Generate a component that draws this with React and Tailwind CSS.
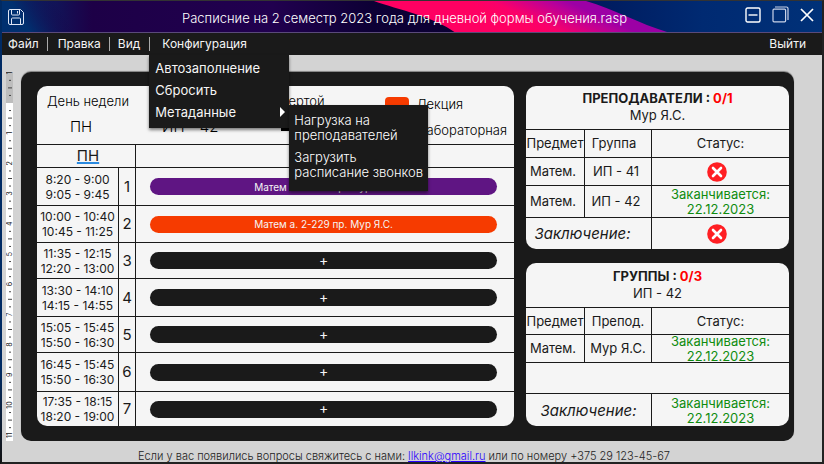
import React from "react";

const lessons = [
  { n: 1, from: "8:20 - 9:00", to: "9:05 - 9:45", text: "Матем а. 2-229 пр. Мур Я.С.", row: "h-[38px]", pill: "bg-[#5f1583] text-[10px]" },
  { n: 2, from: "10:00 - 10:40", to: "10:45 - 11:25", text: "Матем а. 2-229 пр. Мур Я.С.", row: "h-[37px]", pill: "bg-[#f63b00] text-[10px]" },
  { n: 3, from: "11:35 - 12:15", to: "12:20 - 13:00", text: "+", row: "h-[36px]", pill: "bg-[#1a1a1a] pb-[2px] text-sm" },
  { n: 4, from: "13:30 - 14:10", to: "14:15 - 14:55", text: "+", row: "h-[38px]", pill: "bg-[#1a1a1a] pb-[2px] text-sm" },
  { n: 5, from: "15:05 - 15:45", to: "15:50 - 16:30", text: "+", row: "h-[36px]", pill: "bg-[#1a1a1a] pb-[2px] text-sm" },
  { n: 6, from: "16:45 - 15:45", to: "15:50 - 16:30", text: "+", row: "h-[39px]", pill: "bg-[#1a1a1a] pb-[2px] text-sm" },
  { n: 7, from: "17:35 - 18:15", to: "18:20 - 19:00", text: "+", row: "h-[35px]", pill: "bg-[#1a1a1a] pb-[2px] text-sm" },
];

function SaveIcon() {
  return (
    <svg width="16" height="16" viewBox="0 0 16 16" fill="none" stroke="#dfe6f5" strokeWidth="1">
      <path d="M2 .5h10.5l3 3V14a1.5 1.5 0 0 1-1.500 1.500H2A1.500 1.500 0 0 1 .5 14V2A1.500 1.500 0 0 1 2 .5z" />
      <path d="M3.500.5v4.500a1 1 0 0 0 1 1h6a1 1 0 0 0 1-1V.5M9.500 2v2.500" />
      <path d="M3.500 15.500v-5.500a1 1 0 0 1 1-1h7a1 1 0 0 1 1 1v5.500" />
    </svg>
  );
}

function MinimizeIcon() {
  return (
    <svg width="16" height="16" viewBox="0 0 16 16" fill="none" stroke="#fff" strokeWidth="1.4">
      <rect x="1" y="1" width="14" height="14" rx="1.5" />
      <path d="M3.500 8h9" />
    </svg>
  );
}

function RestoreIcon() {
  return (
    <svg width="17" height="17" viewBox="0 0 17 17" fill="none" stroke="#c9d3e8" strokeWidth="1.2">
      <rect x="1" y="3.2" width="12.600" height="12.600" rx="1" />
      <path d="M3 1h11.500a1.500 1.500 0 0 1 1.500 1.500V14" />
    </svg>
  );
}

function CloseIcon() {
  return (
    <svg width="14" height="14" viewBox="0 0 14 14" fill="none" stroke="#fff" strokeWidth="1.7">
      <path d="M1 1l12 12M13 1L1 13" />
    </svg>
  );
}

function ErrorIcon() {
  return (
    <svg className="block" width="20" height="20" viewBox="0 0 20 20" role="img" aria-label="Ошибка">
      <circle cx="10" cy="10" r="9.800" fill="#ff1f23" />
      <path d="M6 6l8 8M14 6l-8 8" stroke="#fff" strokeWidth="2.600" strokeLinecap="round" />
    </svg>
  );
}

function TitleArt() {
  return (
    <svg className="absolute inset-0 h-full w-full" viewBox="0 0 820 32" preserveAspectRatio="none" aria-hidden="true">
      <defs>
        <linearGradient id="base" gradientUnits="userSpaceOnUse" x1="0" y1="0" x2="450" y2="0">
          <stop offset="0" stopColor="#003070" />
          <stop offset="0.2" stopColor="#1d0047" />
          <stop offset="0.6" stopColor="#21004f" />
          <stop offset="0.82" stopColor="#0d0035" />
          <stop offset="1" stopColor="#0b0033" />
        </linearGradient>
        <linearGradient id="corner" gradientUnits="userSpaceOnUse" x1="26" y1="28" x2="58" y2="8">
          <stop offset="0" stopColor="#003070" />
          <stop offset="1" stopColor="#1d0047" stopOpacity="0" />
        </linearGradient>
        <linearGradient id="pink" gradientUnits="userSpaceOnUse" x1="470" y1="3" x2="487" y2="-35">
          <stop offset="0" stopColor="#ff0062" />
          <stop offset="0.25" stopColor="#fa006a" />
          <stop offset="0.8" stopColor="#b8009a" />
          <stop offset="1" stopColor="#9c00a5" />
        </linearGradient>
        <linearGradient id="blue" gradientUnits="userSpaceOnUse" x1="580" y1="0" x2="820" y2="0">
          <stop offset="0" stopColor="#00195c" />
          <stop offset="0.5" stopColor="#002a72" />
          <stop offset="1" stopColor="#003178" />
        </linearGradient>
      </defs>
      <rect width="820" height="32" fill="url(#base)" />
      <rect width="120" height="32" fill="url(#corner)" />
      <path d="M372 0C397 9 430 15 454 32H680V0z" fill="url(#pink)" />
      <path d="M584 0C612 8 635 22 668 32H820V0z" fill="url(#blue)" />
    </svg>
  );
}

function Ruler() {
  const step = 30.2;
  const zero = 31;
  const marks = [];
  for (let i = -1; i <= 11; i++) {
    const y = zero + i * step;
    if (i !== 0) {
      marks.push(
        <text key={"n" + i} transform={"translate(6 " + y + ") rotate(-90)"} textAnchor="middle" fontSize="7" fontWeight="400" fill="#222" fontFamily="Inter, sans-serif">
          {Math.abs(i)}
        </text>
      );
    }
    if (i < 11) {
      marks.push(
        <path key={"t" + i} d={"M3 " + (y + step * 0.25) + "h2M2 " + (y + step / 2) + "h4M3 " + (y + step * 0.75) + "h2"} stroke="#444" strokeWidth="1" />
      );
    }
  }
  return (
    <svg className="shrink-0" width="7" height="369" viewBox="0 0 7 369" aria-hidden="true">
      <rect width="7" height="31" fill="#bdbdbd" />
      <rect y="31" width="7" height="338" fill="#fff" />
      {marks}
    </svg>
  );
}

function Ending() {
  return (
    <div className="-my-1 pt-px text-[13px] leading-[15px] text-[#0f8c0f]">
      Заканчивается:
      <br />
      22.12.2023
    </div>
  );
}

function SideCard({ title, count, name, headClass, children }) {
  return (
    <section className="overflow-hidden rounded-[10px] bg-[#f5f5f5]">
      <header className={"text-center " + headClass}>
        <h2 className="text-[13px] leading-4 font-bold">
          {title} : <span className="text-[#ff0000]">{count}</span>
        </h2>
        <p className="text-[13px] leading-[18px]">{name}</p>
      </header>
      <table className="w-full table-fixed border-separate border-spacing-0 text-center text-[13px] leading-[15px]">
        <colgroup>
          <col className="w-[58px]" />
          <col className="w-[67px]" />
          <col />
        </colgroup>
        <tbody>{children}</tbody>
      </table>
    </section>
  );
}

const line = "border-t border-[#1a1a1a] p-0 font-normal whitespace-nowrap";
const lineLeft = "border-t border-l border-[#1a1a1a] p-0 font-normal whitespace-nowrap";
const summary = " text-[15px] [font-style:oblique_10deg]";

export default function App() {
  return (
    <div className="min-h-screen bg-linear-to-b from-[#002a63] from-80% to-[#111] font-[Inter,'Noto_Sans',sans-serif] text-[#1a1a1a]">
      <div className="flex min-h-screen flex-col border-t border-r-2 border-b-2 border-l-2 border-t-[#333] border-r-[#222] border-b-[#222] border-l-transparent">
        <header className="relative h-8 text-white">
          <TitleArt />
          <div className="relative flex h-full items-center border-b border-[#5a4a7a] pr-2 pl-[6px]">
            <button aria-label="Сохранить">
              <SaveIcon />
            </button>
            <h1 className="flex-1 pt-[3px] pl-10 text-center text-[13px] leading-5 font-light">Расписние на 2 семестр 2023 года для дневной формы обучения.rasp</h1>
            <div className="flex items-center gap-[11px] pb-1">
              <button aria-label="Свернуть">
                <MinimizeIcon />
              </button>
              <button aria-label="Развернуть">
                <RestoreIcon />
              </button>
              <button aria-label="Закрыть">
                <CloseIcon />
              </button>
            </div>
          </div>
        </header>

        <nav className="flex h-[22px] items-center bg-[#1a1a1a] pr-4 pl-[6px] text-xs leading-4 text-[#f5f5f5]">
          <button>Файл</button>
          <span className="ml-2 h-[14px] w-px bg-[#aaa]" />
          <button className="ml-[10px]">Правка</button>
          <span className="ml-2 h-[14px] w-px bg-[#aaa]" />
          <button className="ml-2">Вид</button>
          <div className="relative ml-[9px] flex h-full items-center">
            <span className="h-[14px] w-px bg-[#aaa]" />
            <button className="ml-3">Конфигурация</button>
            <div className="absolute top-full left-0 z-10 flex h-[73px] w-[140px] flex-col items-start bg-[#1a1a1a] pt-[2px] pl-[6px] text-[13px] leading-[22px] shadow-[0_2px_3px_rgba(0,0,0,0.5)]">
              <button>Автозаполнение</button>
              <button>Сбросить</button>
              <div className="relative flex w-full items-center">
                <button className="flex w-full items-center justify-between pr-1">
                  Метаданные
                  <svg width="6" height="10" viewBox="0 0 6 10" fill="#fff">
                    <path d="M1 0l5 5-5 5z" />
                  </svg>
                </button>
                <div className="absolute top-1 left-full flex h-[86px] w-[139px] flex-col gap-[7px] bg-[#1a1a1a] pt-2 pl-[5px] leading-[15px] font-light whitespace-nowrap text-white shadow-[0_2px_3px_rgba(0,0,0,0.5)]">
                  <button className="text-left">
                    Нагрузка на
                    <br />
                    преподавателей
                  </button>
                  <button className="text-left">
                    Загрузить
                    <br />
                    расписание звонков
                  </button>
                </div>
              </div>
            </div>
          </div>
          <button className="ml-auto">Выйти</button>
        </nav>

        <main className="flex flex-1 flex-col bg-[#d3d3d3] pt-[17px]">
          <div className="flex items-start gap-2 pr-7 pl-1">
            <Ruler />
            <div className="flex flex-1 gap-3 rounded-[10px] bg-[#1a1a1a] pt-[14px] pr-[5px] pb-[15px] pl-4 shadow-[0_-1px_1px_rgba(0,0,0,0.4)]">
              <section className="flex-1 overflow-hidden rounded-[10px] bg-[#f5f5f5]">
                <div className="flex h-[58px] px-[7px] pt-[7px] text-[13px] leading-4 font-light text-black">
                  <div className="w-[115px] pl-[3px]">
                    <p>День недели</p>
                    <p className="mt-2 pl-[23px] text-[15px] leading-5">ПН</p>
                  </div>
                  <div className="w-[122px] pt-6 pl-[3px]">
                    <p className="text-[15px] leading-5">ИП - 42</p>
                  </div>
                  <div className="flex flex-1 flex-col">
                    <p>чертой</p>
                    <span className="mt-3 h-[10px] w-[14px] bg-black" />
                  </div>
                  <div className="grid grid-cols-[24px_auto] content-start items-center gap-x-2 gap-y-[10px] pt-[3px]">
                    <span className="h-[15px] rounded-[4px] bg-[#f63b00]" />
                    <span>Лекция</span>
                    <span className="h-[15px] rounded-[4px] bg-[#5f1583]" />
                    <span>Лабораторная</span>
                  </div>
                </div>
                <table className="w-full table-fixed border-separate border-spacing-0 text-center">
                  <colgroup>
                    <col className="w-[81px]" />
                    <col className="w-[17px]" />
                    <col />
                  </colgroup>
                  <thead>
                    <tr className="h-[23px]">
                      <th colSpan="2" className={line + " text-[15px] leading-4"}>
                        <span className="ml-1 underline decoration-[#2a8ae0] decoration-2 underline-offset-1">ПН</span>
                      </th>
                      <th className={lineLeft} />
                    </tr>
                  </thead>
                  <tbody>
                    {lessons.map((l) => (
                      <tr key={l.n} className={l.row}>
                        <td className={line + " text-xs leading-[15px]"}>
                          {l.from}
                          <br />
                          {l.to}
                        </td>
                        <td className={lineLeft + " text-[15px] leading-5"}>{l.n}</td>
                        <td className={lineLeft + " pr-[17px] pl-[14px]"}>
                          <button className={"block h-[17px] w-full rounded-full leading-[14px] text-[#f5f5f5] " + l.pill}>{l.text}</button>
                        </td>
                      </tr>
                    ))}
                  </tbody>
                </table>
              </section>

              <div className="flex w-[263px] flex-col gap-[14px]">
                <SideCard title="ПРЕПОДАВАТЕЛИ" count="0/1" name="Мур Я.С." headClass="h-[43px] pt-1">
                  <tr className="h-[28px]">
                    <th className={line}>Предмет</th>
                    <th className={lineLeft + " pr-2"}>Группа</th>
                    <th className={lineLeft}>Статус:</th>
                  </tr>
                  <tr className="h-[28px]">
                    <td className={line + " pr-1"}>Матем.</td>
                    <td className={lineLeft + " pr-1"}>ИП - 41</td>
                    <td className={lineLeft}>
                      <div className="flex justify-center pr-2">
                        <ErrorIcon />
                      </div>
                    </td>
                  </tr>
                  <tr className="h-8">
                    <td className={line + " pr-1"}>Матем.</td>
                    <td className={lineLeft + " pr-1"}>ИП - 42</td>
                    <td className={lineLeft}>
                      <Ending />
                    </td>
                  </tr>
                  <tr className="h-8">
                    <td colSpan="2" className={line + summary + " pr-3"}>Заключение:</td>
                    <td className={lineLeft}>
                      <div className="flex justify-center pr-2">
                        <ErrorIcon />
                      </div>
                    </td>
                  </tr>
                </SideCard>
                <SideCard title="ГРУППЫ" count="0/3" name="ИП - 42" headClass="h-[44px] pt-[5px]">
                  <tr className="h-[27px]">
                    <th className={line}>Предмет</th>
                    <th className={lineLeft}>Препод.</th>
                    <th className={lineLeft}>Статус:</th>
                  </tr>
                  <tr className="h-[28px]">
                    <td className={line + " pr-1"}>Матем.</td>
                    <td className={lineLeft}>Мур Я.С.</td>
                    <td className={lineLeft}>
                      <Ending />
                    </td>
                  </tr>
                  <tr className="h-[31px]">
                    <td colSpan="3" className={line} />
                  </tr>
                  <tr className="h-[33px]">
                    <td colSpan="2" className={line + summary}>Заключение:</td>
                    <td className={lineLeft}>
                      <Ending />
                    </td>
                  </tr>
                </SideCard>
              </div>
            </div>
          </div>
          <footer className="pt-[9px] pr-4 text-center text-[11px] leading-3 font-light text-[#222]">
            Если у вас появились вопросы свяжитесь с нами:{" "}
            <a href="mailto:llkink@gmail.ru" className="text-[#2a00ff] underline">
              llkink@gmail.ru
            </a>{" "}
            или по номеру +375 29 123-45-67
          </footer>
        </main>
      </div>
    </div>
  );
}
